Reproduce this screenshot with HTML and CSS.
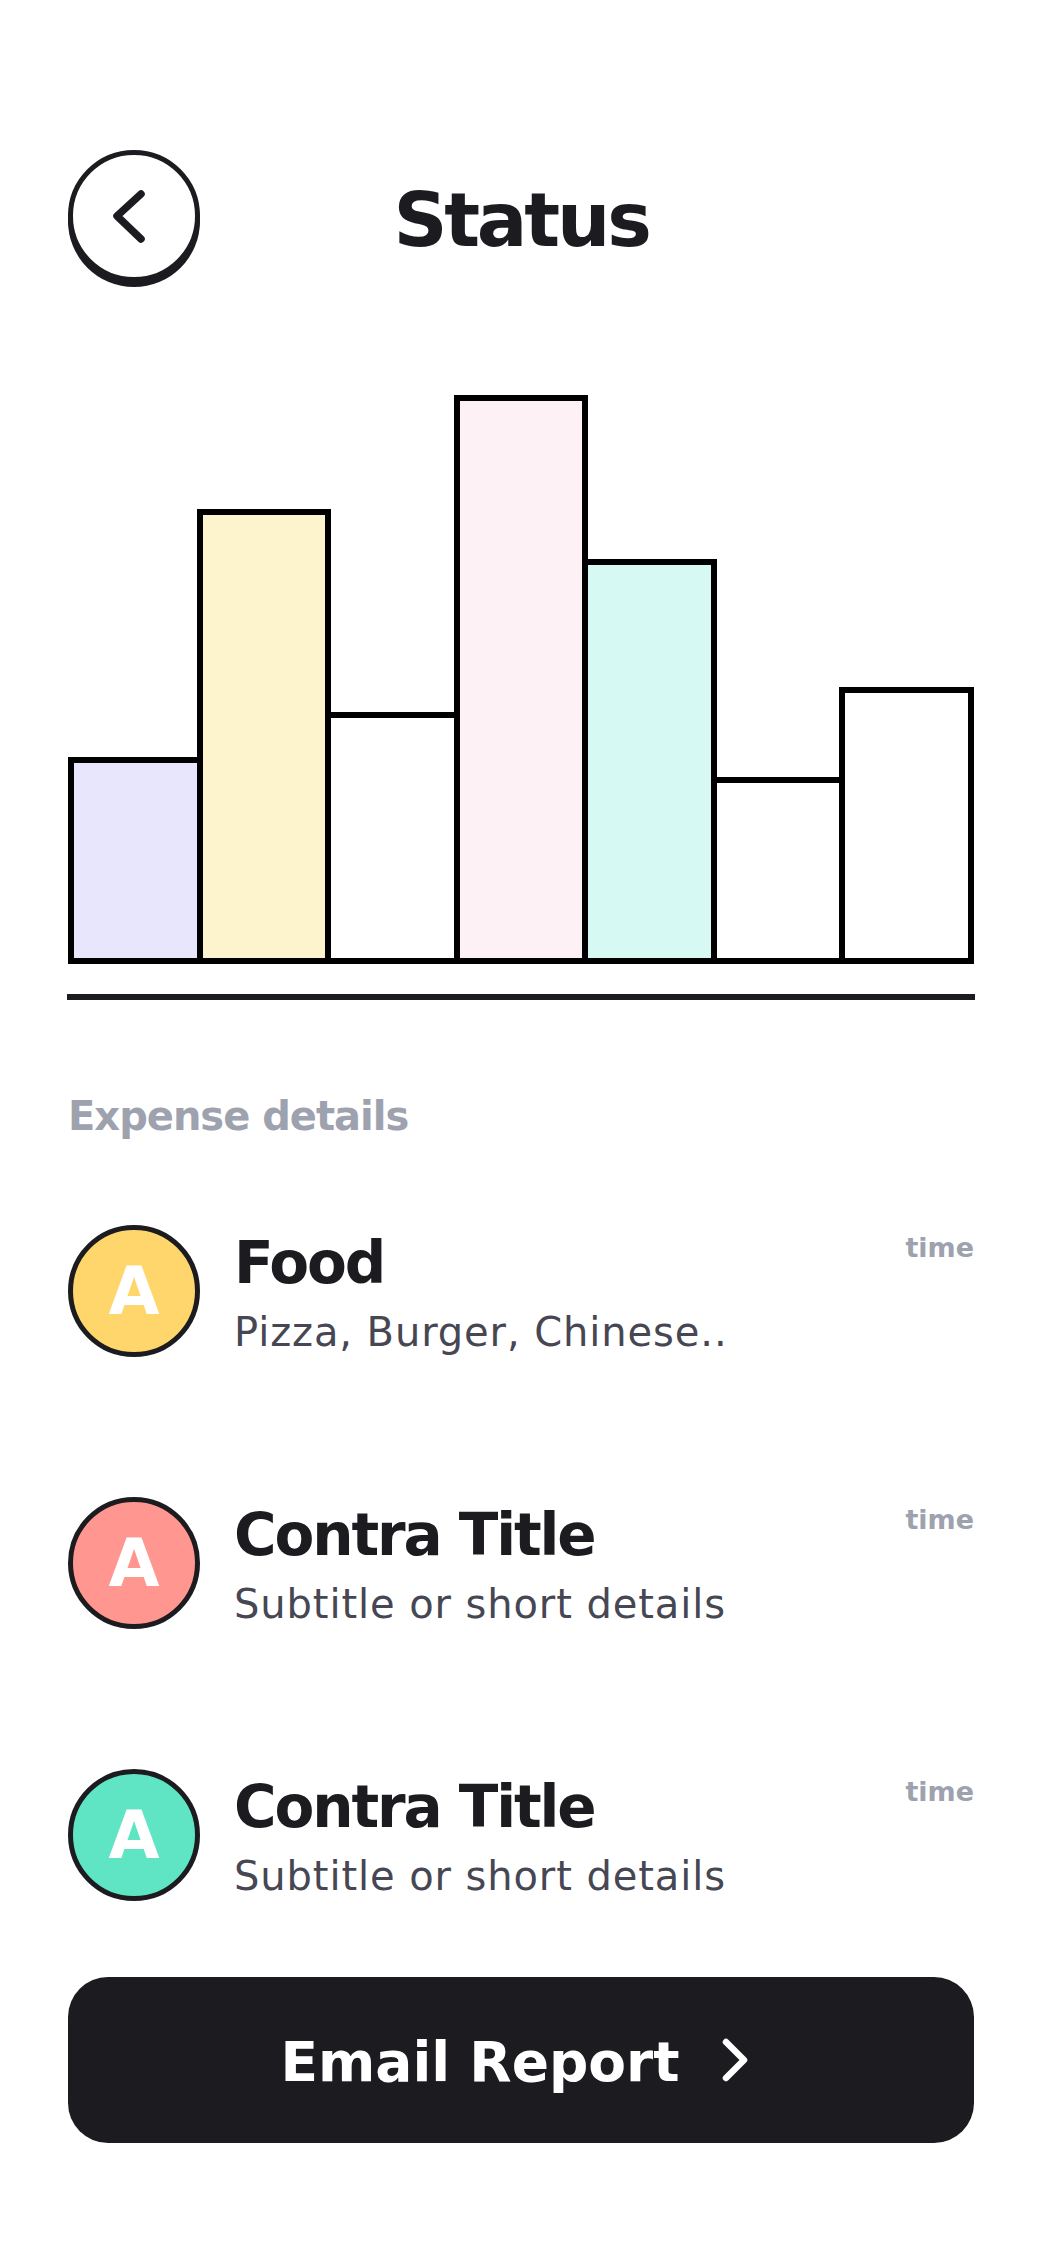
FILE: index.html
```html
<!DOCTYPE html>
<html lang="en">
<head>
<meta charset="utf-8">
<title>Status</title>
<link rel="stylesheet" href="styles.css">
</head>
<body>
<div class="screen">
  <header class="top-bar">
    <button class="back-btn" aria-label="Back">
      <svg class="back-icon" viewBox="0 0 122 122" width="122" height="122">
        <path d="M68 39 L44 61 L68 84" fill="none" stroke="#1c1b20" stroke-width="7.5" stroke-linecap="round" stroke-linejoin="round"/>
      </svg>
    </button>
    <h1 class="title">Status</h1>
    <span class="spacer"></span>
  </header>

  <section class="chart">
    <div class="bars">
      <div class="bar bar-lavender" style="height:207px"></div>
      <div class="bar bar-yellow" style="height:455px"></div>
      <div class="bar bar-white" style="height:252px"></div>
      <div class="bar bar-pink" style="height:569px"></div>
      <div class="bar bar-cyan" style="height:405px"></div>
      <div class="bar bar-white" style="height:187px"></div>
      <div class="bar bar-white" style="height:277px"></div>
    </div>
    <div class="axis"></div>
  </section>

  <h2 class="section-label">Expense details</h2>

  <ul class="list">
    <li class="item">
      <div class="avatar avatar-yellow">A</div>
      <div class="item-text">
        <div class="item-title">Food</div>
        <div class="item-sub">Pizza, Burger, Chinese..</div>
      </div>
      <span class="item-time">time</span>
    </li>
    <li class="item">
      <div class="avatar avatar-salmon">A</div>
      <div class="item-text">
        <div class="item-title">Contra Title</div>
        <div class="item-sub">Subtitle or short details</div>
      </div>
      <span class="item-time">time</span>
    </li>
    <li class="item">
      <div class="avatar avatar-teal">A</div>
      <div class="item-text">
        <div class="item-title">Contra Title</div>
        <div class="item-sub">Subtitle or short details</div>
      </div>
      <span class="item-time">time</span>
    </li>
  </ul>

  <button class="email-btn">
    <span class="email-label">Email Report</span>
    <svg class="email-chevron" viewBox="0 0 30 46" width="30" height="46">
      <path d="M6 5 L24 23 L6 41" fill="none" stroke="#ffffff" stroke-width="6.5" stroke-linecap="round" stroke-linejoin="round"/>
    </svg>
  </button>
</div>
</body>
</html>
```

FILE: styles.css
```css
* {
  box-sizing: border-box;
}

html, body {
  margin: 0;
  padding: 0;
  background: #ffffff;
}

body {
  font-family: "DejaVu Sans", "Liberation Sans", sans-serif;
  color: #1c1b20;
}

.screen {
  width: 1042px;
  padding: 150px 68px 0;
}

/* Header */
.top-bar {
  display: grid;
  grid-template-columns: 132px 1fr 132px;
  align-items: center;
  height: 132px;
}

.back-btn {
  width: 132px;
  height: 132px;
  padding: 0;
  margin: 0;
  border: 5px solid #1c1b20;
  border-radius: 50%;
  background: #ffffff;
  box-shadow: 0 5px 0 #1c1b20;
  display: block;
  cursor: pointer;
}

.back-icon {
  display: block;
  width: 122px;
  height: 122px;
}

.title {
  margin: 0;
  padding-top: 8px;
  text-align: center;
  font-size: 75px;
  line-height: 90px;
  font-weight: 700;
  letter-spacing: -3.2px;
  color: #1c1b20;
}

/* Chart */
.chart {
  margin-top: 113px;
}

.bars {
  display: flex;
  align-items: flex-end;
  height: 569px;
}

.bar {
  flex: 1 1 0;
  border: 6px solid #000000;
  margin-left: -6px;
}

.bar:first-child {
  margin-left: 0;
}

.bar-lavender { background: #e8e6fc; }
.bar-yellow { background: #fdf3cd; }
.bar-white { background: #ffffff; }
.bar-pink { background: #fdf1f6; }
.bar-cyan { background: #d6f9f4; }

.axis {
  margin: 30px -1px 0;
  height: 6px;
  background: #1c1b20;
}

/* Section label */
.section-label {
  margin: 92px 0 0;
  font-size: 40px;
  line-height: 48px;
  font-weight: 700;
  letter-spacing: -1px;
  color: #9ea2ae;
}

/* List */
.list {
  list-style: none;
  margin: 85px 0 0;
  padding: 0;
  display: flex;
  flex-direction: column;
  gap: 140px;
}

.item {
  display: flex;
  align-items: flex-start;
}

.avatar {
  flex: 0 0 132px;
  width: 132px;
  height: 132px;
  border: 5px solid #1c1b20;
  border-radius: 50%;
  display: flex;
  align-items: center;
  justify-content: center;
  color: #ffffff;
  font-size: 66px;
  font-weight: 700;
  line-height: 1;
  padding-top: 2px;
}

.avatar-yellow { background: #ffd66b; }
.avatar-salmon { background: #ff968f; }
.avatar-teal { background: #5fe5c4; }

.item-text {
  flex: 1 1 auto;
  margin-left: 34px;
  padding-top: 9px;
}

.item-title {
  font-size: 58px;
  line-height: 58px;
  font-weight: 700;
  letter-spacing: -2.1px;
  color: #1c1b20;
}

.item-sub {
  margin-top: 16px;
  font-size: 40px;
  line-height: 48px;
  font-weight: 400;
  letter-spacing: 0.9px;
  color: #474753;
}

.item-time {
  margin-top: 7px;
  font-size: 27px;
  line-height: 32px;
  font-weight: 700;
  color: #9ea2ae;
}

/* Button */
.email-btn {
  margin-top: 76px;
  width: 100%;
  height: 166px;
  border: none;
  border-radius: 40px;
  background: #1c1b20;
  color: #ffffff;
  display: flex;
  align-items: center;
  justify-content: center;
  padding: 4px 12px 0 0;
  font-family: "DejaVu Sans", "Liberation Sans", sans-serif;
  cursor: pointer;
}

.email-label {
  font-size: 55px;
  line-height: 55px;
  font-weight: 700;
  color: #ffffff;
}

.email-chevron {
  display: block;
  margin-left: 40px;
  margin-top: -4px;
  width: 30px;
  height: 46px;
}
```
